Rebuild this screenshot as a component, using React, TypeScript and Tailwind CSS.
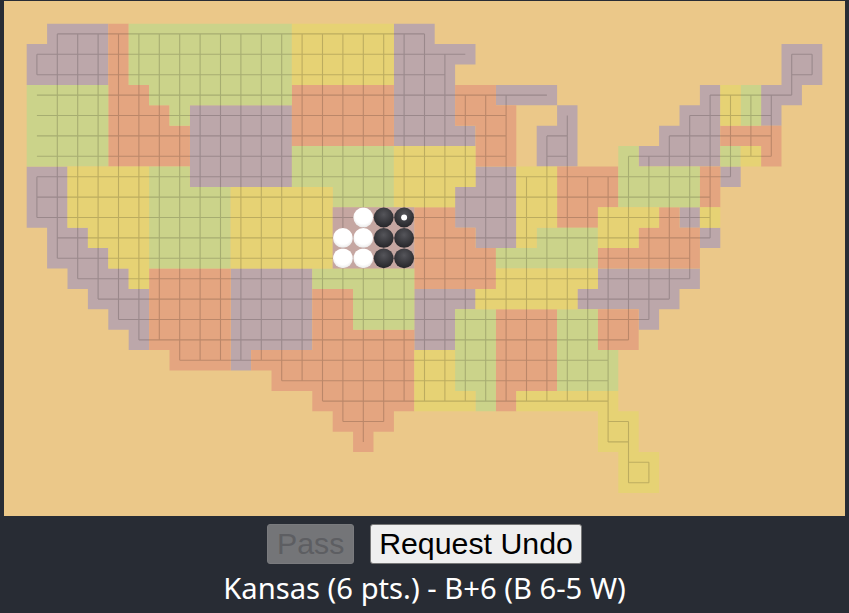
// Go board drawn over a map of the US, states as coloured cells
const BOARD = [
  '.PPPOGGGGGGGGYYYYYPP...................',
  'PPPPOGGGGGGGGYYYYYPPPP...............PP',
  'PPPPOGGGGGGGGYYYYYPPP................PP',
  'GGGGOOGGGGGGGOOOOOPPPOOPPP.......PYGPP.',
  'GGGGOOOGPPPPPOOOOOPPPOOO..P.....PPYGP..',
  'GGGGOOOOPPPPPOOOOOPPPPOO.PP....PPPOOO..',
  'GGGGOOOOPPPPPGGGGGYYYYOO.PP..GPPPPGYO..',
  'PPYYYYGGPPPPPGGGGGYYYYPPYYOOOGGGGOP....',
  'PPYYYYGGGGYYYYYGGGYYYPPPYYOOOGGGGO.....',
  'PPYYYYGGGGYYYYYKKKKOOPPPYYOOYYYOPY.....',
  '.PPYYYGGGGYYYYYKKKKOOOPPYGGGYYOOOP.....',
  '.PPPYYGGGGYYYYYKKKKOOOOGGGGGOOOOO......',
  '..PPPYOOOOPPPPGGGGGOOOOYYYYYPPPPP......',
  '...PPPOOOOPPPPOOGGGPPPYYYYYPPPPP.......',
  '....PPOOOOPPPPOOGGGPPGGOOOGGOOP........',
  '.....POOOOPPPPOOOOOPPGGOOOGGOO.........',
  '.......OOOPOOOOOOOOYYGGOOOGGG..........',
  '............OOOOOOOYYGGOOOGGG..........',
  '..............OOOOOYYYGOYYYYY..........',
  '...............OOO..........YY.........',
  '................O...........YY.........',
  '.............................YY........',
  '.............................YY........',
]

const PITCH = 20.4
const MARGIN = 22.7

const COLORS: Record<string, string> = {
  P: '#bca7aa',
  O: '#e4a580',
  G: '#cbd38a',
  Y: '#e6d274',
  K: '#c5a6a1',
}

const filled = (r: number, c: number) => (BOARD[r]?.[c] ?? '.') !== '.'
const center = (i: number) => MARGIN + PITCH * i + PITCH / 2

// every state colour becomes one path so that neighbouring cells leave no seam
const regionPath = (key: string) => {
  let d = ''
  BOARD.forEach((row, r) => {
    const y = MARGIN + PITCH * r
    for (let c = 0; c < row.length; c++) {
      if (row[c] !== key) continue
      let end = c
      while (row[end + 1] === key) end++
      const x = MARGIN + PITCH * c
      const w = PITCH * (end - c + 1)
      d += `M${x} ${y}h${w}v${PITCH}h${-w}z`
      c = end
    }
  })
  return d
}

const gridPath = () => {
  let d = ''
  BOARD.forEach((row, r) => {
    for (let c = 0; c < row.length; c++) {
      if (!filled(r, c)) continue
      if (filled(r, c + 1)) d += `M${center(c)} ${center(r)}H${center(c + 1)}`
      // the west edge has no line between Washington's foot and California
      const skip = c === 0 && r >= 2 && r <= 6
      if (filled(r + 1, c) && !skip) d += `M${center(c)} ${center(r)}V${center(r + 1)}`
    }
  })
  return d
}

const WHITE = [
  [9, 16],
  [10, 15],
  [10, 16],
  [11, 15],
  [11, 16],
]
const BLACK = [
  [9, 17],
  [9, 18],
  [10, 17],
  [10, 18],
  [11, 17],
  [11, 18],
]

const Board = () => (
  <svg viewBox="0 0 841 515" className="block w-[841px] h-[515px] bg-[#ebc889]">
    <defs>
      <radialGradient id="blackStone" cx="50%" cy="35%" r="65%">
        <stop offset="0%" stopColor="#55555a" />
        <stop offset="100%" stopColor="#26262a" />
      </radialGradient>
      <radialGradient id="whiteStone" cx="50%" cy="40%" r="60%">
        <stop offset="70%" stopColor="#ffffff" />
        <stop offset="100%" stopColor="#e9e9e9" />
      </radialGradient>
    </defs>
    {Object.keys(COLORS).map((key) => (
      <path key={key} d={regionPath(key)} fill={COLORS[key]} />
    ))}
    <path d={gridPath()} fill="none" stroke="#000" strokeOpacity={0.18} strokeWidth={1.1} />
    {WHITE.map(([r, c]) => (
      <circle key={`w${r}-${c}`} cx={center(c)} cy={center(r)} r={9.9} fill="url(#whiteStone)" />
    ))}
    {BLACK.map(([r, c]) => (
      <circle key={`b${r}-${c}`} cx={center(c)} cy={center(r)} r={9.9} fill="url(#blackStone)" />
    ))}
    <circle cx={center(18)} cy={center(9)} r={3} fill="#fff" />
  </svg>
)

export default function App() {
  return (
    <div className="min-h-screen bg-[#282c34] flex flex-col items-center pt-[1px]">
      <Board />
      <div className="flex justify-center gap-4 mt-2 font-['Liberation_Sans',Arial,sans-serif] text-[30.3px] leading-[34px]">
        <button
          disabled
          className="w-[87px] h-[40px] rounded-[3px] border border-[#7a7b7e] bg-[#747578] text-[#5d5e62]"
        >
          Pass
        </button>
        <button className="w-[211.5px] h-[40px] rounded-[3px] border border-[#767676] bg-[#efefef] text-black">
          Request Undo
        </button>
      </div>
      <div className="mt-[6px] font-['Noto_Sans',sans-serif] text-[29.2px] leading-[36px] text-white">
        Kansas (6 pts.) - B+6 (B 6-5 W)
      </div>
    </div>
  )
}
